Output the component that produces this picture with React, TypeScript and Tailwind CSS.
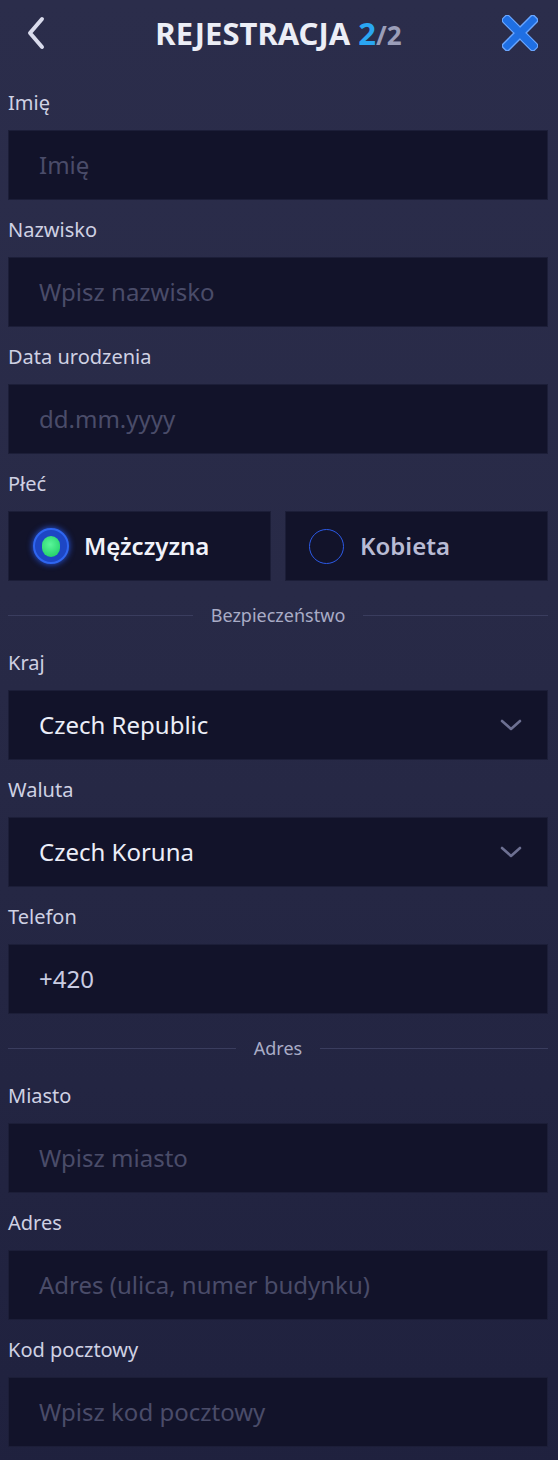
import React, { useState } from "react";

const font = { fontFamily: '"Noto Sans", "Open Sans", sans-serif' };

const BackIcon = () => (
  <svg width="22" height="34" viewBox="0 0 22 34" fill="none">
    <path d="M17 3 L5 17 L17 31" stroke="#d9dbec" strokeWidth="4" strokeLinecap="round" strokeLinejoin="round" />
  </svg>
);

const CloseIcon = () => (
  <svg width="36" height="36" viewBox="0 0 38 38">
    <g stroke="#6aa6ff" strokeWidth="1.5" fill="#1f6fe3">
      <rect x="-4.5" y="14.5" width="47" height="9" rx="3" transform="rotate(45 19 19)" />
      <rect x="-4.5" y="14.5" width="47" height="9" rx="3" transform="rotate(-45 19 19)" />
    </g>
    <rect x="-4" y="15" width="46" height="8" rx="3" fill="#1f6fe3" transform="rotate(45 19 19)" />
  </svg>
);

const ChevronIcon = () => (
  <svg width="24" height="16" viewBox="0 0 24 16" fill="none">
    <path d="M3 4 L12 12 L21 4" stroke="#6d7092" strokeWidth="2.6" strokeLinecap="round" strokeLinejoin="round" />
  </svg>
);

const Label = ({ children }: { children: React.ReactNode }) => (
  <div className="h-6 leading-6 text-[20px] text-[#cfd1e3] mb-[15px]">{children}</div>
);

const Box = ({ children }: { children: React.ReactNode }) => (
  <div className="h-[70px] bg-[#12132a] border border-[#1c1e38] flex items-center px-[30px]">
    {children}
  </div>
);

const TextField = ({ label, placeholder, value }: { label: string; placeholder?: string; value?: string }) => (
  <div className="mt-[18px]">
    <Label>{label}</Label>
    <Box>
      {value ? (
        <span className="text-[24px] text-[#c9cce2]">{value}</span>
      ) : (
        <span className="text-[24px] text-[#4a4c69]">{placeholder}</span>
      )}
    </Box>
  </div>
);

const SelectField = ({ label, value }: { label: string; value: string }) => (
  <div className="mt-[18px]">
    <Label>{label}</Label>
    <div className="h-[70px] bg-[#12132a] border border-[#1c1e38] flex items-center justify-between pl-[30px] pr-[24px]">
      <span className="text-[24px] text-[#eceef8]">{value}</span>
      <ChevronIcon />
    </div>
  </div>
);

// section separator; padding instead of margins so it doesn't collapse with the next field
const Divider = ({ text }: { text: string }) => (
  <div className="pt-[22px] pb-[6px]">
    <div className="flex items-center gap-[18px] h-6">
      <div className="flex-1 h-px bg-[#3a3d5e]" />
      <span className="text-[18px] text-[#a9acc6]">{text}</span>
      <div className="flex-1 h-px bg-[#3a3d5e]" />
    </div>
  </div>
);

const Radio = ({ checked }: { checked: boolean }) =>
  checked ? (
    <div className="w-9 h-9 rounded-full bg-[#1d46c4] border-2 border-[#2f66f0] shadow-[0_0_6px_#2a5cf0] flex items-center justify-center">
      <div className="w-[18px] h-[21px] rounded-full bg-[radial-gradient(circle_at_45%_40%,#5af59a,#17c95e)]" />
    </div>
  ) : (
    <div className="w-[35px] h-[35px] rounded-full border-[1.5px] border-[#2c5ae6] bg-[#12132a]" />
  );

export default function App() {
  const [gender, setGender] = useState<"m" | "k">("m");

  return (
    <div
      style={font}
      className="min-h-[1460px] w-[558px] bg-[linear-gradient(180deg,#2b2d4b_0%,#282a47_40%,#1f213e_100%)] pb-8"
    >
      {/* header */}
      <div className="h-[66px] flex items-center justify-between pl-[25px] pr-[20px]">
        <BackIcon />
        <div className="font-bold text-[31px] leading-none text-[#eceef6] ml-[8px]">
          REJESTRACJA <span className="text-[#2aa6f2]">2</span>
          <span className="text-[#9b9eb9] text-[26px]">/2</span>
        </div>
        <CloseIcon />
      </div>

      <div className="pl-2 pr-[10px]">
        <div className="mt-[25px]">
          <Label>Imię</Label>
          <Box>
            <span className="text-[24px] text-[#4a4c69]">Imię</span>
          </Box>
        </div>
        <TextField label="Nazwisko" placeholder="Wpisz nazwisko" />
        <TextField label="Data urodzenia" placeholder="dd.mm.yyyy" />

        <div className="mt-[18px]">
          <Label>Płeć</Label>
          <div className="grid grid-cols-2 gap-[14px]">
            <button
              onClick={() => setGender("m")}
              className="h-[70px] bg-[#12132a] border border-[#1c1e38] flex items-center gap-[15px] pl-[24px]"
            >
              <Radio checked={gender === "m"} />
              <span className={`text-[24px] font-semibold ${gender === "m" ? "text-[#f1f2fa]" : "text-[#b8bbd4]"}`}>
                Mężczyzna
              </span>
            </button>
            <button
              onClick={() => setGender("k")}
              className="h-[70px] bg-[#12132a] border border-[#1c1e38] flex items-center gap-[16px] pl-[23px]"
            >
              <Radio checked={gender === "k"} />
              <span className={`text-[24px] font-semibold ${gender === "k" ? "text-[#f1f2fa]" : "text-[#b8bbd4]"}`}>
                Kobieta
              </span>
            </button>
          </div>
        </div>

        <Divider text="Bezpieczeństwo" />

        <SelectField label="Kraj" value="Czech Republic" />
        <SelectField label="Waluta" value="Czech Koruna" />
        <TextField label="Telefon" value="+420" />

        <Divider text="Adres" />

        <TextField label="Miasto" placeholder="Wpisz miasto" />
        <TextField label="Adres" placeholder="Adres (ulica, numer budynku)" />
        <TextField label="Kod pocztowy" placeholder="Wpisz kod pocztowy" />
      </div>
    </div>
  );
}
